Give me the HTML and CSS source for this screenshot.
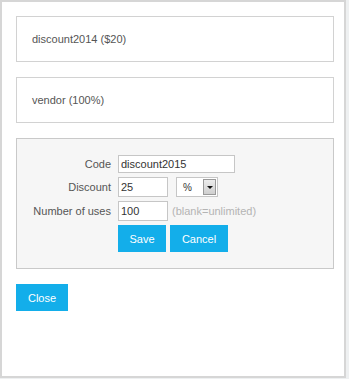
FILE: index.html
```html
<!DOCTYPE html>
<html>
	<head>
		<title>Discount codes</title>
		<link rel="stylesheet" href="styles.css">
	</head>
	<body>
		<div class="dialog">
			<div class="code-item">discount2014 ($20)</div>
			<div class="code-item">vendor (100%)</div>
			<form class="editor">
				<label class="lbl">Code</label>
				<div class="field"><input type="text" class="txt wide" value="discount2015"></div>
				<label class="lbl">Discount</label>
				<div class="field">
					<input type="text" class="txt short" value="25">
					<div class="pick">
						<span class="pick-val">%</span>
						<span class="pick-arrow"></span>
					</div>
				</div>
				<label class="lbl">Number of uses</label>
				<div class="field">
					<input type="text" class="txt short" value="100">
					<span class="hint">(blank=unlimited)</span>
				</div>
				<span></span>
				<div class="field btns">
					<button type="button" class="btn save">Save</button>
					<button type="button" class="btn cancel">Cancel</button>
				</div>
			</form>
			<button type="button" class="btn close">Close</button>
		</div>
	</body>
</html>
```
FILE: styles.css
```css
body{
	margin: 0;
	background-color: #eef0f1;
	font-family: "Liberation Sans", Arial, sans-serif;
	font-size: 11px;
	color: #555;
}

.dialog{
	box-sizing: border-box;
	width: 346px;
	height: 378px;
	background: #fff;
	border: 2px solid #d6d6d6;
	padding: 14px 10px 0 14px;
}

.code-item{
	box-sizing: border-box;
	height: 46px;
	border: 1px solid #d2d2d2;
	padding-left: 15px;
	display: flex;
	align-items: center;
	font-size: 11px;
	color: #555;
	margin-bottom: 15px;
}

.editor{
	box-sizing: border-box;
	height: 131px;
	margin: 0 0 15px 0;
	background: #f6f6f6;
	border: 1px solid #c9c9c9;
	padding: 16px 0 0 15px;
	display: grid;
	grid-template-columns: 79px auto;
	column-gap: 7px;
	row-gap: 4px;
	align-items: center;
	align-content: start;
}

.lbl{
	text-align: right;
	color: #555;
	white-space: nowrap;
}

.field{
	display: flex;
	align-items: center;
}

.txt{
	box-sizing: border-box;
	height: 18px;
	border: 1px solid #c6c6c6;
	background: #fff;
	font-family: "Liberation Sans", Arial, sans-serif;
	font-size: 11px;
	color: #333;
	padding: 0 2px;
	margin: 0;
	outline: none;
}

.txt.wide{ width: 117px; }
.txt.short{ width: 50px; height: 20px; }

.pick{
	box-sizing: border-box;
	margin-left: 8px;
	width: 42px;
	height: 20px;
	border: 1px solid #c6c6c6;
	background: #fff;
	display: flex;
	align-items: center;
	justify-content: space-between;
	padding: 0 1px 0 6px;
	color: #333;
	font-size: 10px;
}

.pick-arrow{
	box-sizing: border-box;
	width: 13px;
	height: 16px;
	background: linear-gradient(#ececec, #cfcfcf);
	border: 1px solid #9a9a9a;
	position: relative;
}

.pick-arrow:after{
	content: "";
	position: absolute;
	left: 3px;
	top: 6px;
	border-left: 3px solid transparent;
	border-right: 3px solid transparent;
	border-top: 3px solid #111;
}

.hint{
	margin-left: 4px;
	color: #b4b4b4;
	font-size: 11px;
}

.btns{ gap: 4px; }

.btn{
	height: 27px;
	border: 0;
	background: #13aeea;
	color: #fff;
	font-family: "Liberation Sans", Arial, sans-serif;
	font-size: 11px;
	padding: 0;
	cursor: pointer;
}

.save{ width: 48px; }
.cancel{ width: 58px; }
.close{ width: 52px; display: block; }
```
